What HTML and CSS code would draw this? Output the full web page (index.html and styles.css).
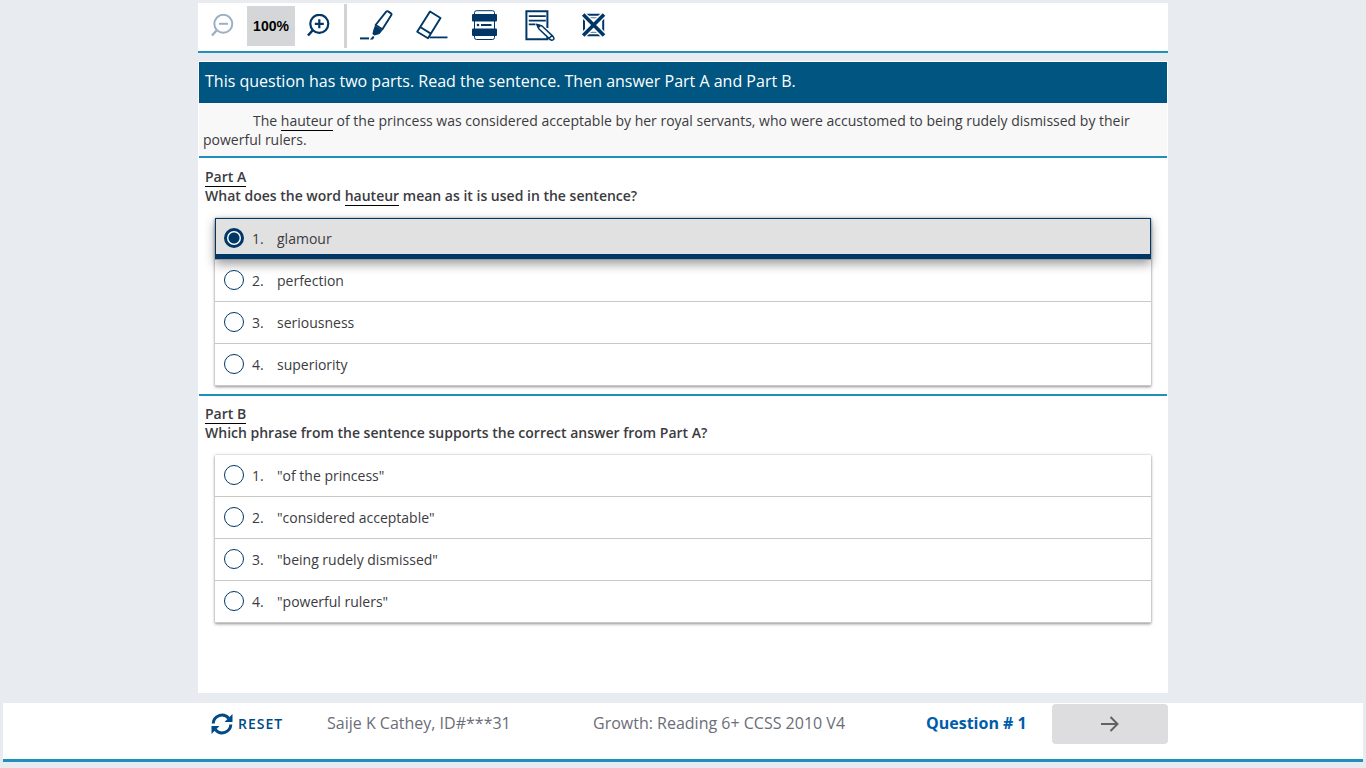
FILE: index.html
```html
<!DOCTYPE html>
<html lang="en">
<head>
<meta charset="utf-8">
<meta name="viewport" content="width=device-width, initial-scale=1">
<title>Growth: Reading 6+</title>
<link rel="stylesheet" href="styles.css">
</head>
<body>
<header class="toolbar">
  <div class="zoom-group">
    <button class="tool" type="button" aria-label="Zoom out" disabled>
      <svg class="icon" width="24" height="24" viewBox="0 0 24 24"><g fill="none" stroke="currentColor" stroke-width="2"><circle cx="12.3" cy="9.8" r="9"/><path d="M8 9.8h9"/><path d="M6 16 1 21.5" stroke-width="2.4"/></g></svg>
    </button>
    <output class="zoom-level">100%</output>
    <button class="tool" type="button" aria-label="Zoom in">
      <svg class="icon" width="24" height="24" viewBox="0 0 24 24"><g fill="none" stroke="currentColor" stroke-width="2.2"><circle cx="12.3" cy="9.8" r="9"/><path d="M7.8 9.8h9M12.3 5.3v9"/><path d="M6 16 1 21.5" stroke-width="2.6"/></g></svg>
    </button>
  </div>
  <div class="tool-group">
    <button class="tool" type="button" aria-label="Highlighter">
      <svg class="icon" width="34" height="32" viewBox="0 0 34 32"><path d="M26.2 1.6Q27 .8 28 1.4L31 3.4Q32 4.2 31.2 5.2L22.4 19.2 15.6 15Z" fill="none" stroke="currentColor" stroke-width="1.9" stroke-linejoin="round"/><path d="M15 15.5 22.5 20.2 19.5 24 14.5 25.4 12.4 24 13.3 20ZM13 26l1.4 1-1.4 2.4H9.8Z" fill="currentColor"/><path d="M0 28.4h9" stroke="currentColor" stroke-width="2"/></svg>
    </button>
    <button class="tool" type="button" aria-label="Eraser">
      <svg class="icon" width="34" height="32" viewBox="0 0 34 32"><path d="M16 1.5 26.5 8 14 28.2 3.2 21.8ZM6.2 17 16.8 23.6" fill="none" stroke="currentColor" stroke-width="1.9" stroke-linejoin="round"/><path d="M15.5 27.4h18" stroke="currentColor" stroke-width="1.8"/></svg>
    </button>
    <button class="tool" type="button" aria-label="Line reader">
      <svg class="icon" width="34" height="32" viewBox="0 0 34 32"><rect x="6.5" y=".7" width="20" height="28.8" rx="2" fill="none" stroke="currentColor" stroke-width="1"/><rect x="4" y="4" width="25" height="7.4" rx="1" fill="currentColor"/><rect x="4" y="18.5" width="25" height="7.5" rx="1" fill="currentColor"/><circle cx="10" cy="15" r="1.3" fill="currentColor"/><path d="M13 15h10.5" stroke="currentColor" stroke-width="2"/></svg>
    </button>
    <button class="tool" type="button" aria-label="Notepad">
      <svg class="icon" width="34" height="32" viewBox="0 0 34 32"><g fill="none" stroke="currentColor" stroke-width="2"><path d="M25.4 18V1.3H4.4V29.3H25.4V27"/><path d="M6.8 6.2h17M6.8 10.6h17M6.8 14.4H13.5" stroke-width="1.8"/><path d="M14.8 14.4 20 16 31 26.4Q32.8 28.4 31.2 29.8 29.8 31 28 29.4L17 19ZM30 25.5 27 28.5" stroke-width="1.5" stroke-linejoin="round"/></g><path d="m14 13.6 5.5 1.7-3.4 3.4Z" fill="currentColor"/></svg>
    </button>
    <button class="tool" type="button" aria-label="Answer eliminator">
      <svg class="icon" width="34" height="32" viewBox="0 0 34 32"><g fill="none" stroke="currentColor"><path d="M8 4.8h19.2v20.4H8Z" stroke-width="2"/><path d="M12 7.8h11.2M12 22.3h11.2" stroke-width=".7"/><path d="M6 3.5 29 26.5M29 3.5 6 26.5" stroke="#fff" stroke-width="6.4"/><path d="M7.2 4.6 28 25.4M28 4.6 7.2 25.4" stroke-width="3.6"/></g></svg>
    </button>
  </div>
</header>

<main class="question">
  <h1 class="directions">This question has two parts. Read the sentence. Then answer Part A and Part B.</h1>
  <p class="passage">The <span class="underlined">hauteur</span> of the princess was considered acceptable by her royal servants, who were accustomed to being rudely dismissed by their powerful rulers.</p>

  <section class="part">
    <h2 class="prompt" id="prompt-a"><span class="underlined">Part A</span><br>What does the word <span class="underlined">hauteur</span> mean as it is used in the sentence?</h2>
    <div class="options" role="radiogroup" aria-labelledby="prompt-a">
      <label class="option"><input class="radio" type="radio" name="part-a" checked><span class="number">1.</span><span>glamour</span></label>
      <label class="option"><input class="radio" type="radio" name="part-a"><span class="number">2.</span><span>perfection</span></label>
      <label class="option"><input class="radio" type="radio" name="part-a"><span class="number">3.</span><span>seriousness</span></label>
      <label class="option"><input class="radio" type="radio" name="part-a"><span class="number">4.</span><span>superiority</span></label>
    </div>
  </section>

  <section class="part">
    <h2 class="prompt" id="prompt-b"><span class="underlined">Part B</span><br>Which phrase from the sentence supports the correct answer from Part A?</h2>
    <div class="options" role="radiogroup" aria-labelledby="prompt-b">
      <label class="option"><input class="radio" type="radio" name="part-b"><span class="number">1.</span><span>"of the princess"</span></label>
      <label class="option"><input class="radio" type="radio" name="part-b"><span class="number">2.</span><span>"considered acceptable"</span></label>
      <label class="option"><input class="radio" type="radio" name="part-b"><span class="number">3.</span><span>"being rudely dismissed"</span></label>
      <label class="option"><input class="radio" type="radio" name="part-b"><span class="number">4.</span><span>"powerful rulers"</span></label>
    </div>
  </section>
</main>

<footer class="footer">
  <div class="footer-inner">
    <button class="reset" type="button">
      <svg class="icon" width="22" height="22" viewBox="0 0 22 22"><path d="M2.2 10.5A8.8 8.8 0 0 1 17.6 5.2M19.8 11.5A8.8 8.8 0 0 1 4.4 16.8" fill="none" stroke="currentColor" stroke-width="3"/><path d="M21.5 1v8h-8ZM.5 21v-8h8Z" fill="currentColor"/></svg>
      <span>RESET</span>
    </button>
    <span class="status">Saije K Cathey, ID#***31</span>
    <span class="status">Growth: Reading 6+ CCSS 2010 V4</span>
    <span class="status question-number">Question # 1</span>
    <button class="next" type="button" aria-label="Next question">
      <svg class="icon" width="18" height="16" viewBox="0 0 18 16"><path d="M0 8h16.5M9.5 1l7 7-7 7" fill="none" stroke="currentColor" stroke-width="2"/></svg>
    </button>
  </div>
</footer>
</body>
</html>
```
FILE: styles.css
```css
* {
  box-sizing: border-box;
}

body {
  margin: 0;
  min-height: 100vh;
  padding: 3px 3px 6px;
  display: flex;
  flex-direction: column;
  background: #e8ebf0;
  color: #3b3b41;
  font: 14px/19px "Open Sans", "Noto Sans", sans-serif;
}

button {
  border: 0;
  padding: 0;
  font: inherit;
  cursor: pointer;
}

.icon {
  display: block;
}

.toolbar,
.question,
.footer-inner {
  width: 100%;
  max-width: 970px;
  margin: 0 auto;
}

.toolbar {
  display: flex;
  align-items: center;
  padding: 1px 13px 3px;
  background: #fff;
  border-bottom: 2px solid #1f8fbb;
}

.zoom-group,
.tool-group {
  display: flex;
  align-items: center;
}

.zoom-group {
  gap: 12px;
  height: 44px;
  padding-right: 13px;
  border-right: 3px solid #d3d3d5;
}

.tool-group {
  gap: 20px;
  padding-left: 13px;
}

.tool {
  background: none;
  color: #003767;
}

.tool:disabled {
  color: #9bb0c5;
  cursor: default;
}

.zoom-level {
  width: 48px;
  background: #d5d6d8;
  color: #000;
  font: bold 14px/40px "Liberation Sans", Arial, sans-serif;
  text-align: center;
}

.question {
  flex: 1;
  margin: 8px auto 10px;
  padding: 1px;
  background: #fff;
}

.directions {
  margin: 0;
  padding: 8px 6px 11px;
  background: #005581;
  color: #fff;
  font-size: 16px;
  font-weight: 400;
  line-height: 22px;
}

.passage {
  margin: 0 0 1px;
  padding: 8px 4px 7px;
  background: #f8f8f8;
  border-bottom: 2px solid #1f8fbb;
  text-indent: 50px;
}

.underlined {
  border-bottom: 1px solid #000;
}

.part {
  padding: 8px 0;
}

.part + .part {
  border-top: 2px solid #1f8fbb;
}

.prompt {
  margin: 0 6px 13px;
  font-size: 14px;
  font-weight: 600;
}

.options {
  margin: 0 16px;
  box-shadow: 0 1px 3px rgba(0, 0, 0, 0.4), 0 0 2px rgba(0, 0, 0, 0.15);
}

.option {
  display: flex;
  align-items: center;
  height: 42px;
  padding-left: 9px;
  border-bottom: 1px solid #c8c8c8;
  cursor: pointer;
}

.option:has(.radio:checked) {
  background: #e1e1e1;
  border-bottom-color: #9b9b9b;
  box-shadow: inset 0 0 0 1px #003767, inset 0 -5px #003767, 0 4px 10px rgba(0, 0, 0, 0.4);
}

.radio {
  appearance: none;
  width: 20px;
  height: 20px;
  margin: 0 8px 2px 0;
  border: 1px solid #003767;
  border-radius: 50%;
  background: #fff;
}

.radio:checked {
  border-width: 3px;
  background: radial-gradient(circle, #003767 5px, #fff 6px);
}

.number {
  width: 25px;
}

.footer {
  background: #fff;
  border-bottom: 3px solid #1f8fbb;
  color: #6b6d78;
  font-size: 16px;
  line-height: 22px;
}

.footer-inner {
  display: grid;
  grid-template-columns: 116px 266fr 333fr 126px 116px;
  align-items: center;
  padding: 1px 0 15px 13px;
}

.reset {
  display: flex;
  align-items: center;
  gap: 5px;
  background: none;
  color: #004b87;
  font-size: 14px;
  font-weight: 600;
  letter-spacing: 1px;
}

.status {
  padding-bottom: 2px;
}

.question-number {
  color: #005daa;
  font-weight: 700;
}

.next {
  display: grid;
  place-items: center;
  height: 40px;
  border-radius: 4px;
  background: #dddddf;
  color: #606163;
}
```
